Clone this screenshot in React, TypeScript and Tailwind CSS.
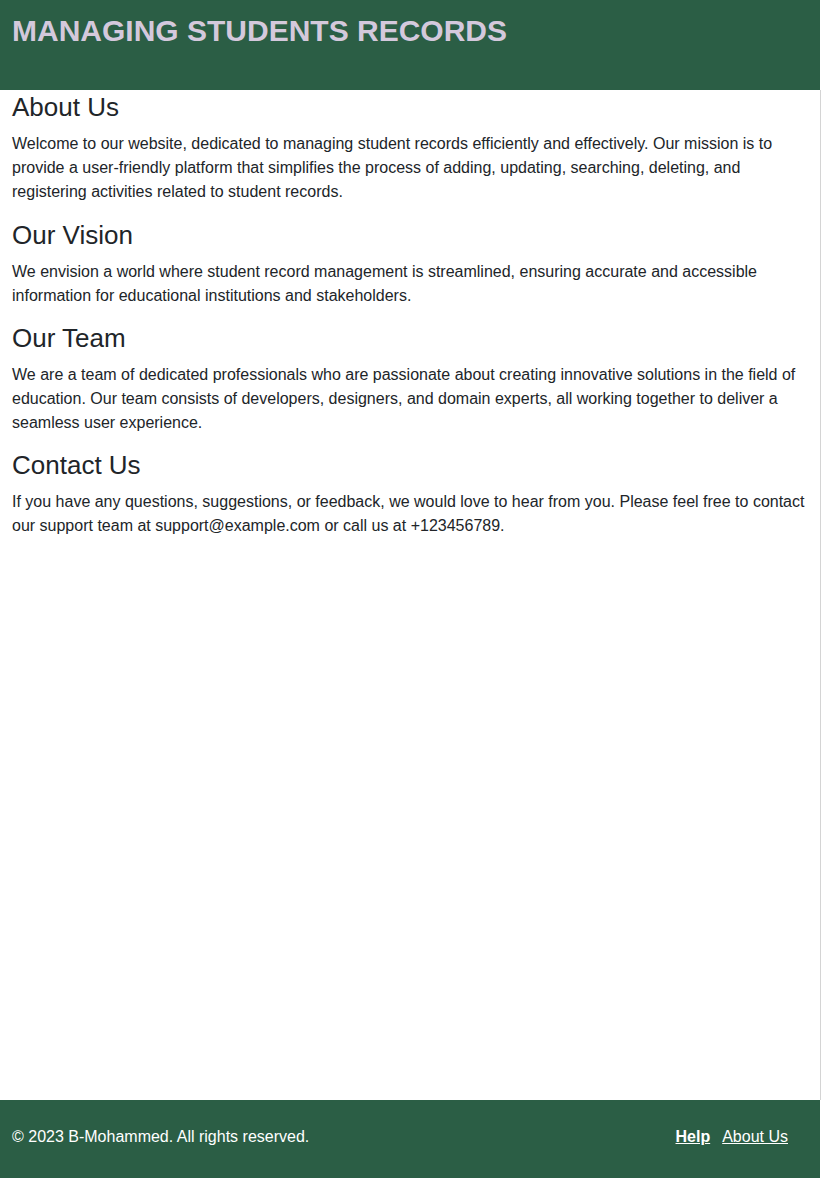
const sections = [
  {
    title: "About Us",
    body: "Welcome to our website, dedicated to managing student records efficiently and effectively. Our mission is to provide a user-friendly platform that simplifies the process of adding, updating, searching, deleting, and registering activities related to student records.",
  },
  {
    title: "Our Vision",
    body: "We envision a world where student record management is streamlined, ensuring accurate and accessible information for educational institutions and stakeholders.",
  },
  {
    title: "Our Team",
    body: "We are a team of dedicated professionals who are passionate about creating innovative solutions in the field of education. Our team consists of developers, designers, and domain experts, all working together to deliver a seamless user experience.",
  },
  {
    title: "Contact Us",
    body: "If you have any questions, suggestions, or feedback, we would love to hear from you. Please feel free to contact our support team at support@example.com or call us at +123456789.",
  },
];

export default function App() {
  return (
    <div className="min-h-screen w-[821px] flex flex-col bg-white font-['Liberation_Sans',Arial,sans-serif] text-[#212529]">
      <header className="h-[90px] w-[820px] shrink-0 bg-[#2b5e45] px-3 pt-[13px]">
        <h1 className="text-[30px] leading-[36px] font-bold text-[#d4c9dc]">
          MANAGING STUDENTS RECORDS
        </h1>
      </header>

      <main className="flex-1 border-r border-[#d4d4d4] px-3 pt-[2px]">
        {sections.map((s, i) => (
          <section key={s.title} className={i === 0 ? "pb-px" : ""}>
            <h2 className="text-[26px] leading-[30px] mb-2.5">{s.title}</h2>
            <p className="text-base leading-6 mb-[15px]">{s.body}</p>
          </section>
        ))}
      </main>

      <footer className="h-[78px] w-[820px] shrink-0 bg-[#2b5e45] pl-3 pr-8 pb-1 flex items-center justify-between text-white text-base">
        <p>© 2023 B-Mohammed. All rights reserved.</p>
        <div className="flex gap-3">
          <a href="#" className="font-bold underline">
            Help
          </a>
          <a href="#" className="underline">
            About Us
          </a>
        </div>
      </footer>
    </div>
  );
}
